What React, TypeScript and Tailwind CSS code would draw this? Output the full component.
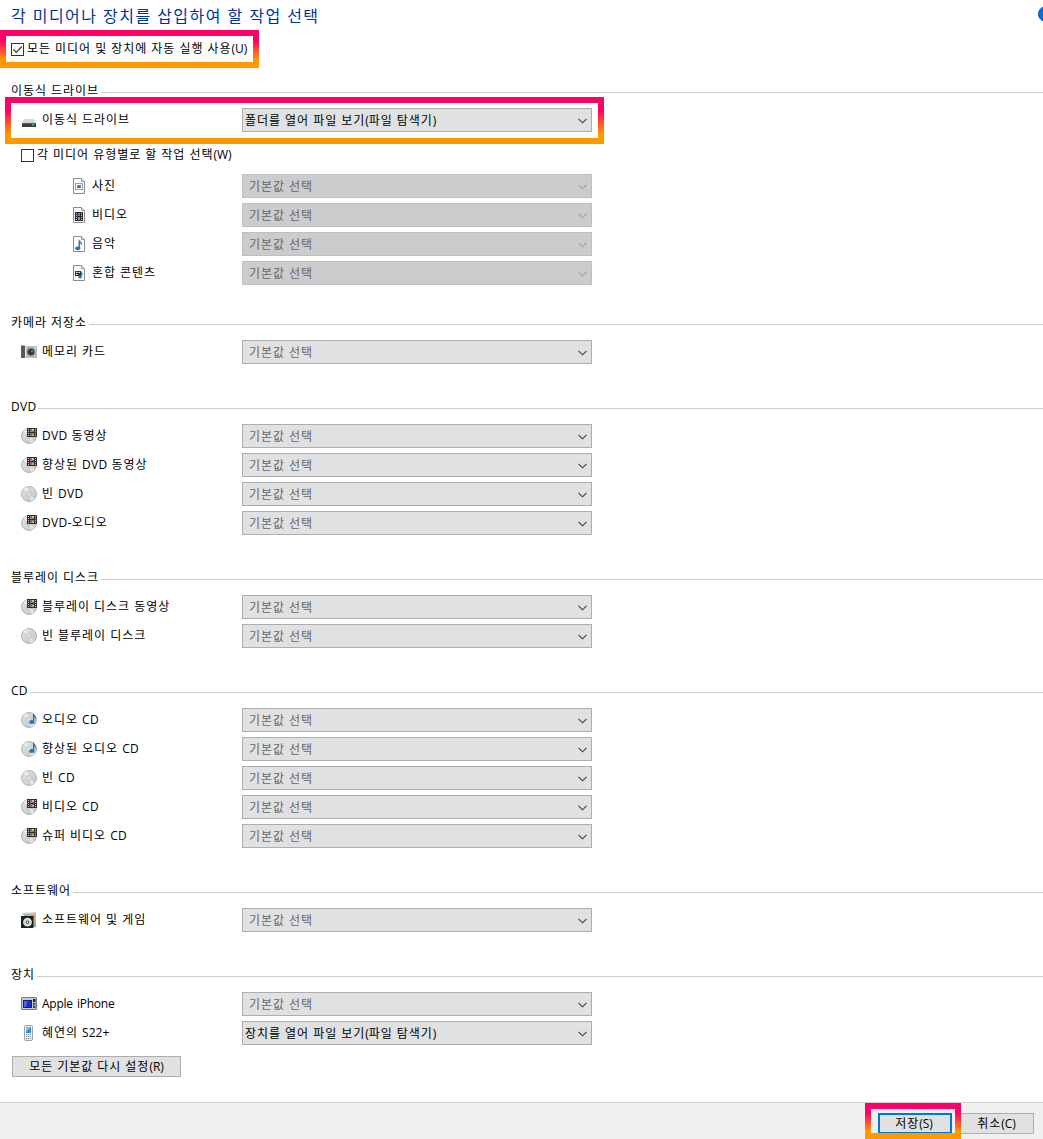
import React from "react";

type IconName =
  | "drive" | "photo" | "video" | "music" | "mixed" | "camera"
  | "discVideo" | "disc" | "discAudio" | "software" | "player" | "phone";

/* Hangul runs are tracked slightly wider than Latin runs. */
function T({ children, wide }: { children: string; wide?: boolean }) {
  const runs = children.match(/[\uac00-\ud7a3 ]+|[^\uac00-\ud7a3 ]+/g) ?? [];
  return (
    <>
      {runs.map((r, i) =>
        /[\uac00-\ud7a3 ]/.test(r) ? (
          <span key={i} className={wide ? "tracking-[1.45px]" : "tracking-[0.08em]"}>{r}</span>
        ) : (
          <span key={i} className={/[a-z]{3}/.test(r) ? "tracking-[-0.02em]" : /^[A-Z]{2}/.test(r) ? "tracking-[0.3px]" : ""}>{r}</span>
        ),
      )}
    </>
  );
}

function FilmBadge() {
  return (
    <g shapeRendering="crispEdges">
      <rect x="6" y="0" width="10" height="9" fill="#303034" />
      <path d="M7.500 1v8M14.500 1v8" stroke="#c4c4c4" strokeWidth="1" strokeDasharray="1 1" />
      <rect x="9" y="1" width="4" height="3" fill="#5f78ae" />
      <rect x="9" y="5" width="4" height="3" fill="#64769f" />
      <rect x="11" y="1" width="2" height="2" fill="#ecc04c" />
      <rect x="9" y="3" width="2" height="1" fill="#c9803f" />
      <rect x="9" y="5" width="2" height="1" fill="#b0506a" />
      <rect x="11" y="6" width="2" height="2" fill="#d9a84a" />
    </g>
  );
}

function Disc() {
  return (
    <g>
      <circle cx="8" cy="8" r="7.500" fill="url(#disc)" stroke="#a9adad" strokeWidth="0.900" />
      <path d="M8 8L2.500 3A7.500 7.500 0 0 1 6 1z" fill="#fff" opacity=".5" />
      <path d="M8 8l5.500 5a7.500 7.500 0 0 1-3.500 2z" fill="#fff" opacity=".5" />
      <circle cx="8" cy="8" r="2.400" fill="#e6eaea" stroke="#b9bdbd" strokeWidth="0.800" />
      <circle cx="8" cy="8" r="0.900" fill="#fff" stroke="#b8bcbc" strokeWidth="0.500" />
    </g>
  );
}

function Page() {
  return (
    <g>
      <path d="M2.500.5h8l3 3v12h-11z" fill="#fbfbfb" stroke="#8c8c8c" />
      <path d="M10.500.5v3h3" fill="#e4e4e4" stroke="#9a9a9a" />
    </g>
  );
}

function Icon({ name }: { name: IconName }) {
  return (
    <svg width="16" height="16" viewBox="0 0 16 16" className="block shrink-0">
      {name === "drive" && (
        <g>
          <path d="M3.500 7h9L15 11H1z" fill="#d5d7d9" />
          <rect x="1" y="11" width="14" height="4" rx=".5" fill="#3b3d3f" />
          <path d="M1 11.300h14" stroke="#8b8d8f" strokeWidth=".6" />
          <rect x="11" y="12" width="2" height="1.500" fill="#2fe04a" />
        </g>
      )}
      {name === "photo" && (
        <g>
          <Page />
          <rect x="4.500" y="5.500" width="7" height="6" fill="#fff" stroke="#a0a0a0" />
          <rect x="6" y="7" width="4" height="3" fill="#3f8fc6" />
          <path d="M6 10l2-1.500 2 1.500z" fill="#2d7350" />
        </g>
      )}
      {name === "video" && (
        <g>
          <Page />
          <g shapeRendering="crispEdges">
            <rect x="4" y="5" width="8" height="9" fill="#29292d" />
            <path d="M5.500 6v8M10.500 6v8" stroke="#ddd" strokeDasharray="1 1" />
            <rect x="7" y="6" width="2" height="3" fill="#6c8098" />
            <rect x="7" y="10" width="2" height="3" fill="#6c92cc" />
          </g>
        </g>
      )}
      {name === "music" && (
        <g>
          <Page />
          <path d="M8 3.500c.5 2 4 2.500 3 6.500-.4-2-1.200-2.500-1.900-2.800V12H7.600V4z" fill="#2473b5" />
          <ellipse cx="6.700" cy="12.300" rx="2.500" ry="1.900" fill="#2473b5" />
        </g>
      )}
      {name === "mixed" && (
        <g>
          <Page />
          <rect x="4" y="6" width="6" height="5" fill="#34363b" />
          <path d="M5 7h1.500v1H5zM7.500 7H9v1H7.500zM5 9h1.500v1H5z" fill="#f0f0f0" />
          <path d="M10 6c.3 1.500 2.500 2 2 4.500-.4-1-.8-1.300-1.200-1.500V12H10z" fill="#2473b5" />
          <ellipse cx="9" cy="12" rx="1.900" ry="1.500" fill="#2c83c4" />
        </g>
      )}
      {name === "camera" && (
        <g>
          <rect x="0" y="2" width="16" height="12" rx=".5" fill="#b9bbbc" />
          <rect x="0" y="1.500" width="4" height="12.500" fill="#565859" />
          <path d="M4.500 2v12" stroke="#e6e6e6" />
          <circle cx="10" cy="8" r="4.200" fill="#7b7f81" />
          <circle cx="10" cy="8" r="3" fill="#26343a" />
          <circle cx="11" cy="7.500" r="1.100" fill="#4f9aa3" />
          <rect x="13.500" y="3" width="1.500" height="1.200" fill="#f3f3f3" />
        </g>
      )}
      {name === "disc" && <Disc />}
      {name === "discVideo" && (
        <g>
          <Disc />
          <FilmBadge />
        </g>
      )}
      {name === "discAudio" && (
        <g>
          <Disc />
          <path d="M12 .5c.4 2.500 3.800 3 2.900 7.500-.4-2-1-2.700-1.600-3V10H12z" fill="#2473b5" />
          <ellipse cx="10.800" cy="10" rx="2.600" ry="2" fill="#1f74bc" />
        </g>
      )}
      {name === "software" && (
        <g>
          <path d="M1 1l14-1v3H1z" fill="#c9cfcb" />
          <path d="M3 2h12v13H3z" fill="#a9b7a4" />
          <path d="M10 3l5-1v7l-3 1z" fill="#e9a567" />
          <path d="M12 9h3v6h-3z" fill="#8db492" />
          <rect x="0" y="4" width="12.500" height="12" fill="#1c2021" />
          <circle cx="6.500" cy="10.200" r="4.400" fill="#d9dddd" />
          <circle cx="6.500" cy="10.200" r="1.800" fill="#585d5e" />
          <circle cx="6.500" cy="10.200" r=".8" fill="#fff" />
        </g>
      )}
      {name === "player" && (
        <g>
          <rect x=".5" y="1.500" width="15" height="12" rx=".5" fill="#c7c9ce" stroke="#777b83" />
          <rect x="2" y="4" width="9" height="8" fill="#14206f" />
          <path d="M3 5h4l-2 6H3z" fill="#4a66ee" />
          <path d="M7 5h3v6H6z" fill="#1a2fc4" />
          <rect x="12" y="3" width="2.500" height="3" fill="#25272b" />
          <rect x="12" y="7" width="2.500" height="5" fill="#42454b" />
          <rect x="12.800" y="8.500" width="1" height="1.500" fill="#d5d7da" />
        </g>
      )}
      {name === "phone" && (
        <g>
          <rect x="3.500" y=".5" width="8" height="15" rx="1.500" fill="#eef1f3" stroke="#9ba3a9" />
          <rect x="5" y="2" width="5" height="6" fill="#2f8bd4" />
          <path d="M5 2h5l-5 5z" fill="#7cc0ef" />
          <path d="M5 9.500h5M5 11.500h5M5 13.500h5" stroke="#87929a" strokeDasharray="1.200 .7" />
        </g>
      )}
    </svg>
  );
}

function Select({ value, state = "default" }: { value?: string; state?: "default" | "set" | "disabled" }) {
  const look =
    state === "disabled"
      ? "border-[#bfbfbf] bg-[#cccccc] pl-[6px] text-[#666666]"
      : state === "set"
        ? "border-[#adadad] bg-[#e1e1e1] pl-[2px] text-black"
        : "border-[#adadad] bg-[#e1e1e1] pl-[6px] text-[#666666]";
  return (
    <div className={`flex h-6 w-[350px] shrink-0 items-start justify-between border pr-1 ${look}`}>
      <span className="mt-1 leading-4"><T>{value ?? "기본값 선택"}</T></span>
      <svg width="9" height="6" viewBox="0 0 9 6" className="mt-[9px]">
        <path d="M.5.8l4 4 4-4" fill="none" stroke={state === "disabled" ? "#a0a0a0" : "#404040"} strokeWidth="1.100" />
      </svg>
    </div>
  );
}

type RowData = { icon: IconName; label: string; value?: string; state?: "set" | "disabled"; nested?: boolean };

function Row({ icon, label, value, state, nested }: RowData) {
  return (
    <div className="flex h-[29px] items-start">
      <div className={`flex h-6 shrink-0 items-start pt-1 ${nested ? "w-[171px]" : "w-[221px]"}`}>
        <Icon name={icon} />
        <span className="ml-[5px] leading-4"><T>{label}</T></span>
      </div>
      <Select value={value} state={state} />
    </div>
  );
}

function Heading({ children }: { children: string }) {
  return (
    <div className="flex h-7 items-start pl-[11px]">
      <h2 className="mr-[2px] mt-[2px] leading-[18px] whitespace-nowrap"><T>{children}</T></h2>
      <div className="mt-3 h-px flex-1 bg-[#cccccc]" />
    </div>
  );
}

function Section({ title, rows }: { title: string; rows: RowData[] }) {
  return (
    <section className="mb-[27px]">
      <Heading>{title}</Heading>
      <div className="pl-[21px]">
        {rows.map((r) => <Row key={r.label} {...r} />)}
      </div>
    </section>
  );
}

function Highlight({ className }: { className: string }) {
  return (
    <div
      className={`pointer-events-none absolute border-6 [border-image:linear-gradient(to_bottom,#ff0066_28%,#ff9900_78%)_6] ${className}`}
    />
  );
}

function CheckBox({ checked }: { checked?: boolean }) {
  return (
    <span className="flex size-[13px] shrink-0 items-center justify-center border border-[#333333] bg-white">
      {checked && (
        <svg width="11" height="11" viewBox="0 0 11 11">
          <path d="M1.300 5.400l2.900 2.900L9.900 2.500" fill="none" stroke="#333" strokeWidth="1.200" />
        </svg>
      )}
    </span>
  );
}

const mediaRows: RowData[] = [
  { icon: "photo", label: "사진", state: "disabled", nested: true },
  { icon: "video", label: "비디오", state: "disabled", nested: true },
  { icon: "music", label: "음악", state: "disabled", nested: true },
  { icon: "mixed", label: "혼합 콘텐츠", state: "disabled", nested: true },
];

const sections: { title: string; rows: RowData[] }[] = [
  { title: "카메라 저장소", rows: [{ icon: "camera", label: "메모리 카드" }] },
  {
    title: "DVD",
    rows: [
      { icon: "discVideo", label: "DVD 동영상" },
      { icon: "discVideo", label: "향상된 DVD 동영상" },
      { icon: "disc", label: "빈 DVD" },
      { icon: "discVideo", label: "DVD-오디오" },
    ],
  },
  {
    title: "블루레이 디스크",
    rows: [
      { icon: "discVideo", label: "블루레이 디스크 동영상" },
      { icon: "disc", label: "빈 블루레이 디스크" },
    ],
  },
  {
    title: "CD",
    rows: [
      { icon: "discAudio", label: "오디오 CD" },
      { icon: "discAudio", label: "향상된 오디오 CD" },
      { icon: "disc", label: "빈 CD" },
      { icon: "discVideo", label: "비디오 CD" },
      { icon: "discVideo", label: "슈퍼 비디오 CD" },
    ],
  },
  { title: "소프트웨어", rows: [{ icon: "software", label: "소프트웨어 및 게임" }] },
  {
    title: "장치",
    rows: [
      { icon: "player", label: "Apple iPhone" },
      { icon: "phone", label: "혜연의 S22+", value: "장치를 열어 파일 보기(파일 탐색기)", state: "set" },
    ],
  },
];

export default function App() {
  return (
    <div className="relative flex h-[1139px] w-[1043px] flex-col overflow-hidden bg-white font-['Open_Sans','Noto_Sans_CJK_KR',sans-serif] text-[12px] text-black">
      <svg width="0" height="0" className="absolute">
        <defs>
          <linearGradient id="disc" x1="0" y1="0" x2="1" y2="1">
            <stop offset="0" stopColor="#e2e5e5" />
            <stop offset=".5" stopColor="#d0d4d4" />
            <stop offset="1" stopColor="#c0c8c7" />
          </linearGradient>
        </defs>
      </svg>

      <header className="flex h-10 items-start justify-between pl-[11px]">
        <h1 className="mt-1 text-[16px] leading-6 text-[#003399]"><T wide>각 미디어나 장치를 삽입하여 할 작업 선택</T></h1>
        <span className="-mr-[11px] mt-[6px] size-4 shrink-0 rounded-full border border-[#15559a] bg-[#0a6cd6]" />
      </header>
      <label className="flex h-10 items-start pl-[11px]">
        <span className="mt-[3px] flex"><CheckBox checked /></span>
        <span className="ml-[3px] leading-[17px]"><T>모든 미디어 및 장치에 자동 실행 사용(U)</T></span>
      </label>

      <main className="flex-1">
        <section className="mb-[22px]">
          <Heading>이동식 드라이브</Heading>
          <div className="pl-[21px]">
            <Row icon="drive" label="이동식 드라이브" value="폴더를 열어 파일 보기(파일 탐색기)" state="set" />
            <label className="flex h-[37px] items-start pt-[9px]">
              <span className="mt-[3px] flex"><CheckBox /></span>
              <span className="ml-[3px] leading-[17px]"><T>각 미디어 유형별로 할 작업 선택(W)</T></span>
            </label>
            <div className="pl-[50px]">
              {mediaRows.map((r) => <Row key={r.label} {...r} />)}
            </div>
          </div>
        </section>
        {sections.map((s) => <Section key={s.title} {...s} />)}
        <button className="-mt-[21px] ml-3 block h-[21px] w-[169px] border border-[#adadad] bg-[#e1e1e1] leading-[18px]">
          <T>모든 기본값 다시 설정(R)</T>
        </button>
      </main>

      <footer className="flex h-[37px] shrink-0 items-start justify-end gap-2 border-t border-[#d0d0d0] bg-[#f0f0f0] pr-[9px] pt-[10px]">
        <button className="h-[21px] w-[74px] border-2 border-[#0078d7] bg-[#e1e1e1] pr-0.5 leading-[16px]"><T>저장(S)</T></button>
        <button className="h-[21px] w-[74px] border border-[#adadad] bg-[#e1e1e1] pr-px leading-[18px]"><T>취소(C)</T></button>
      </footer>

      <Highlight className="left-0 top-[30px] h-[38px] w-[259px]" />
      <Highlight className="left-[5px] top-[97px] h-[47px] w-[599px]" />
      <Highlight className="left-[865px] top-[1103px] h-[36px] w-[96px]" />
    </div>
  );
}
